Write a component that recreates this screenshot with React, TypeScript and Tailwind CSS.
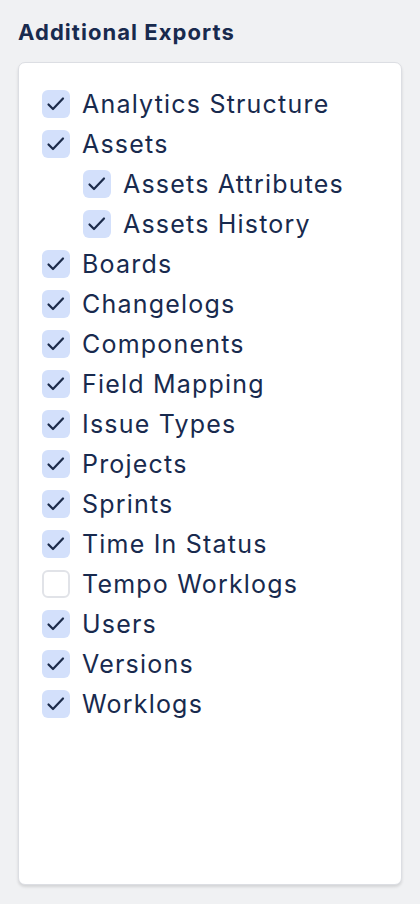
const items: { label: string; checked: boolean; nested?: boolean }[] = [
  { label: "Analytics Structure", checked: true },
  { label: "Assets", checked: true },
  { label: "Assets Attributes", checked: true, nested: true },
  { label: "Assets History", checked: true, nested: true },
  { label: "Boards", checked: true },
  { label: "Changelogs", checked: true },
  { label: "Components", checked: true },
  { label: "Field Mapping", checked: true },
  { label: "Issue Types", checked: true },
  { label: "Projects", checked: true },
  { label: "Sprints", checked: true },
  { label: "Time In Status", checked: true },
  { label: "Tempo Worklogs", checked: false },
  { label: "Users", checked: true },
  { label: "Versions", checked: true },
  { label: "Worklogs", checked: true },
];

function Checkbox({ checked }: { checked: boolean }) {
  if (!checked) {
    return <span className="w-[28px] h-[28px] shrink-0 rounded-[6px] border-2 border-[#e1e3e8] bg-white" />;
  }
  return (
    <span className="w-[28px] h-[28px] shrink-0 rounded-[6px] bg-[#d3e0fb] block">
      <svg width="28" height="28" viewBox="0 0 28 28" fill="none">
        <path d="M6.5 14.5 L11 19 L21 8.5" stroke="#1c2b4a" strokeWidth="2.2" strokeLinecap="round" strokeLinejoin="round" />
      </svg>
    </span>
  );
}

export default function App() {
  return (
    <div className="min-h-[904px] w-[420px] bg-[#f0f1f3] px-[18px] pt-[17px] pb-[19px] font-['Inter',sans-serif] text-[#182a4e]">
      <h2 className="text-[22px] leading-[30px] font-bold tracking-[1.05px] mb-[15px]">Additional Exports</h2>
      <div className="h-[823px] rounded-[7px] border border-[#dcdee3] bg-white shadow-[0_2px_3px_rgba(0,0,0,0.12)] pt-[21px] pl-[23px]">
        <ul className="flex flex-col">
          {items.map((it) => (
            <li
              key={it.label}
              className={`flex items-center h-[40px] gap-[12px] ${it.nested ? "pl-[41px]" : ""}`}
            >
              <Checkbox checked={it.checked} />
              <span className="text-[25px] leading-none tracking-[1.2px]">{it.label}</span>
            </li>
          ))}
        </ul>
      </div>
    </div>
  );
}
